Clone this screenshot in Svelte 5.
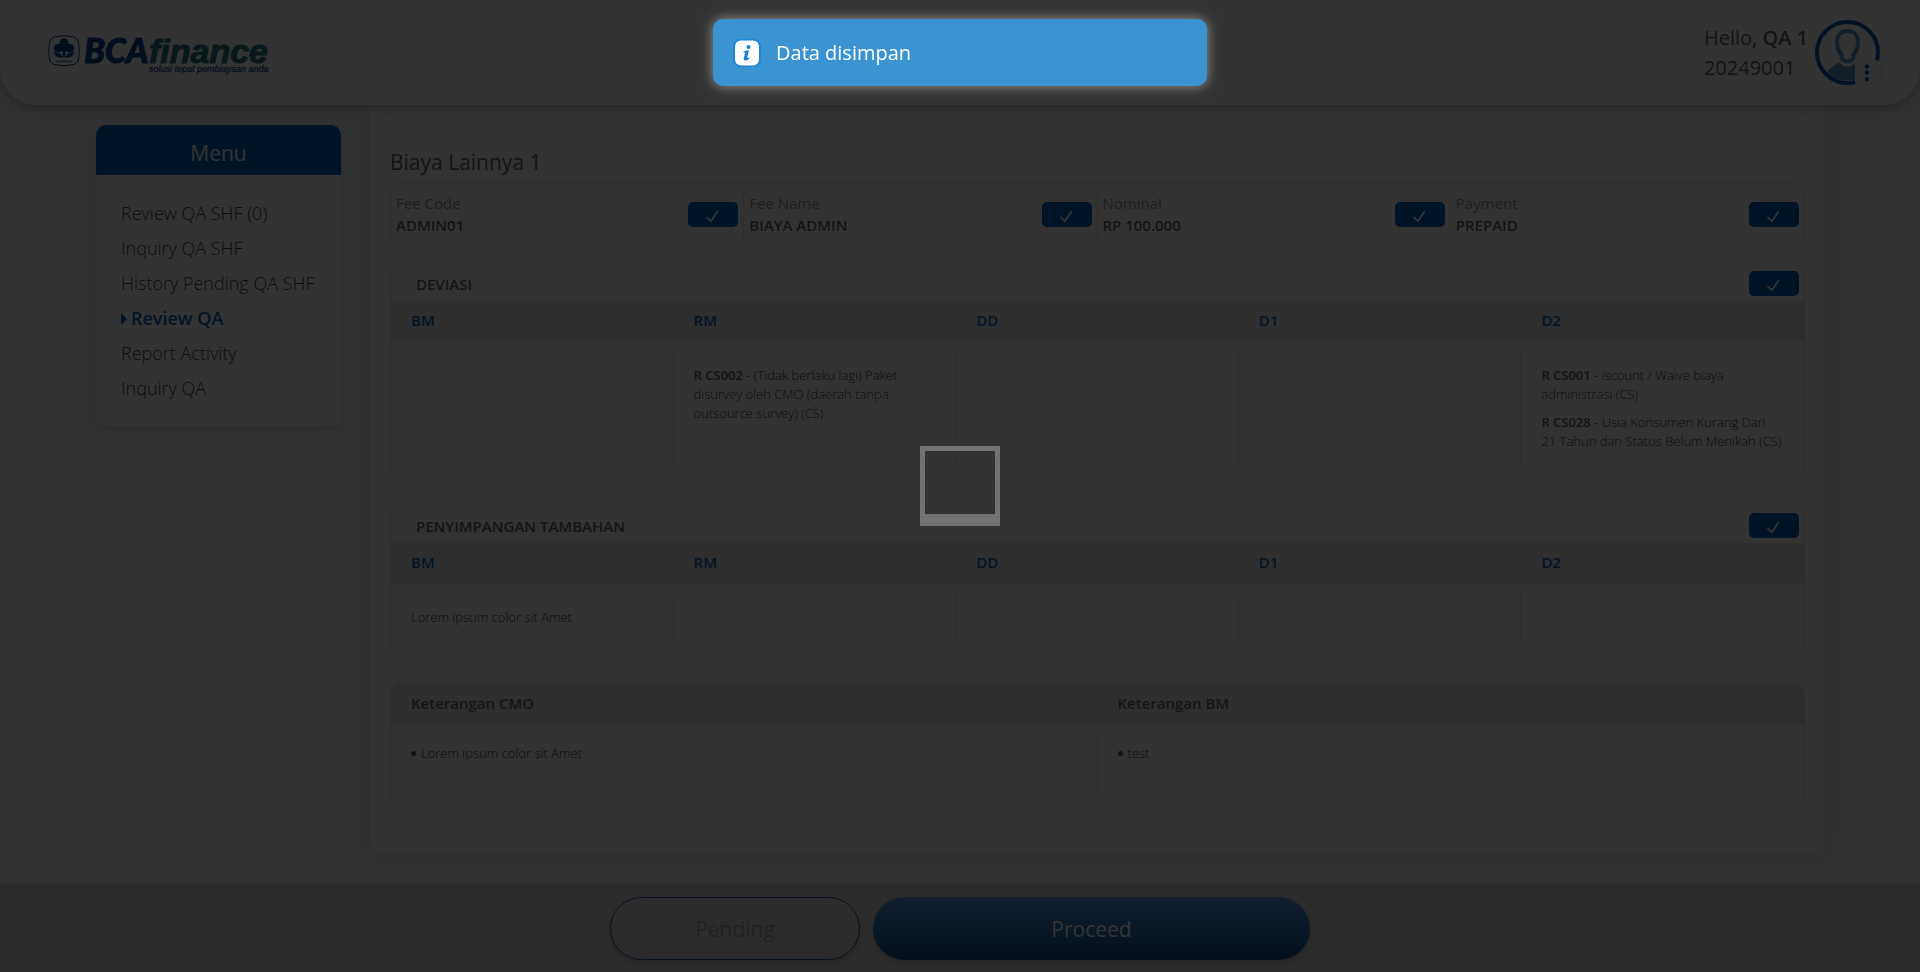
<script>
  const menu = [
    'Review QA SHF (0)',
    'Inquiry QA SHF',
    'History Pending QA SHF',
    'Review QA',
    'Report Activity',
    'Inquiry QA'
  ];
  const active = 'Review QA';

  const fees = [
    { label: 'Fee Code', value: 'ADMIN01' },
    { label: 'Fee Name', value: 'BIAYA ADMIN' },
    { label: 'Nominal', value: 'RP 100.000' },
    { label: 'Payment', value: 'PREPAID' }
  ];

  const levels = ['BM', 'RM', 'DD', 'D1', 'D2'];

  const sections = [
    {
      title: 'DEVIASI',
      cells: [
        [],
        [{ code: 'R CS002', text: '(Tidak berlaku lagi) Paket disurvey oleh CMO (daerah tanpa outsource survey) (CS)' }],
        [],
        [],
        [
          { code: 'R CS001', text: 'iscount / Waive biaya administrasi (CS)' },
          { code: 'R CS028', text: 'Usia Konsumen Kurang Dari 21\u00a0Tahun dan Status Belum Menikah (CS)' }
        ]
      ]
    },
    {
      title: 'PENYIMPANGAN TAMBAHAN',
      cells: [[{ text: 'Lorem ipsum color sit Amet' }], [], [], [], []]
    }
  ];

  const notes = [
    { title: 'Keterangan CMO', items: ['Lorem ipsum color sit Amet'] },
    { title: 'Keterangan BM', items: ['test'] }
  ];
</script>

{#snippet check(name)}
  <button class="check" type="button" aria-label={name}>
    <svg viewBox="0 0 16 16" width="16" height="16" aria-hidden="true">
      <path d="M1.500 9.200 6 13.200 12.800 3" fill="none" stroke="#fff" stroke-width="1.700" />
    </svg>
  </button>
{/snippet}

<div class="page">
  <header class="top">
    <svg class="logo" viewBox="0 0 232 44" width="232" height="44" role="img" aria-label="BCA finance">
      <path d="M6 2Q16-.6 26 2Q30 3 30.600 8Q32 15.500 30.600 24Q30 28.500 26 29.500Q16 32 6 29.500Q2 28.500 1.400 24Q0 15.500 1.400 8Q2 3 6 2Z" fill="none" stroke="#0a4391" stroke-width="1" />
      <g fill="#0a4391">
        <circle cx="16" cy="8" r="4.600" />
        <path d="M13.500 10h5l-1.500 12h-2z" />
        <circle cx="10.200" cy="13.200" r="4.300" />
        <circle cx="21.800" cy="13.200" r="4.300" />
        <path d="M5.500 17Q12 15.500 15.500 22.500Q7.500 24 5.500 17ZM26.500 17Q20 15.500 16.500 22.500Q24.500 24 26.500 17Z" />
        <path d="M8 25.500h16v1.800H8z" opacity=".6" />
      </g>
      <path d="M6.500 17Q12 16.500 15.300 22.500M25.500 17Q20 16.500 16.700 22.500" fill="none" stroke="#fff" stroke-width=".6" />
      <text x="36" y="28" class="brand-bca">BCA</text>
      <text x="101" y="28" class="brand-fin">finance</text>
      <text x="101" y="37" class="brand-tag">solusi tepat pembiayaan anda</text>
    </svg>
    <div class="user">
      <p class="hello">Hello, <strong>QA 1</strong><br />20249001</p>
      <div class="avatar">
        <svg viewBox="0 0 65 65" width="65" height="65" aria-hidden="true">
          <circle cx="32.500" cy="32.500" r="30.500" fill="none" stroke="#005cb4" stroke-width="4" />
          <path d="M12.500 52.500Q17 45 24.500 42.500Q32.500 51 40.500 42.500Q48 45 52.500 52.500Q45 60.500 32.500 60.500Q20 60.500 12.500 52.500Z" fill="#5f9cc8" />
          <path d="M32.500 11C26 11 22 15.500 22 22C22 28 23.500 31.500 26.500 34.500V38C29.500 42.500 35.500 42.500 38.500 38V34.500C41.500 31.500 43 28 43 22C43 15.500 39 11 32.500 11Z" fill="none" stroke="#5f9cc8" stroke-width="4" />
        </svg>
        <button class="more" type="button" aria-label="Account options">
          <svg viewBox="0 0 25 25" width="25" height="25" aria-hidden="true">
            <g fill="#00509a">
              <circle cx="12" cy="6.500" r="2.200" />
              <circle cx="12" cy="12.500" r="2.200" />
              <circle cx="12" cy="19" r="2.200" />
            </g>
          </svg>
        </button>
      </div>
    </div>
  </header>

  <div class="body">
    <nav class="menu">
      <h2>Menu</h2>
      <ul>
        {#each menu as item}
          <li><a href="#menu" class:active={item === active}>{item}</a></li>
        {/each}
      </ul>
    </nav>

    <main class="card">
      <div class="box tail"><span></span><span></span><span></span><span></span></div>

      <h1>Biaya Lainnya 1</h1>
      <div class="box fees">
        {#each fees as fee}
          <div class="fee">
            <div>
              <div class="label">{fee.label}</div>
              <div class="value">{fee.value}</div>
            </div>
            {@render check('Approve ' + fee.label)}
          </div>
        {/each}
      </div>

      {#each sections as section}
        <section class="box">
          <div class="title">
            <h3>{section.title}</h3>
            {@render check('Approve ' + section.title)}
          </div>
          <table>
            <thead>
              <tr>
                {#each levels as level}<th>{level}</th>{/each}
              </tr>
            </thead>
            <tbody>
              <tr>
                {#each section.cells as cell}
                  <td>
                    <div class="cell">
                      {#each cell as entry}
                        <p>{#if entry.code}<strong>{entry.code}</strong>{' - '}{/if}{entry.text}</p>
                      {/each}
                    </div>
                  </td>
                {/each}
              </tr>
            </tbody>
          </table>
        </section>
      {/each}

      <section class="box notes">
        <table>
          <thead>
            <tr>
              {#each notes as note}<th>{note.title}</th>{/each}
            </tr>
          </thead>
          <tbody>
            <tr>
              {#each notes as note}
                <td>
                  <ul class="cell">
                    {#each note.items as item}<li>{item}</li>{/each}
                  </ul>
                </td>
              {/each}
            </tr>
          </tbody>
        </table>
      </section>
    </main>
  </div>

  <footer class="actions">
    <button class="pending" type="button">Pending</button>
    <button class="proceed" type="button">Proceed</button>
  </footer>
</div>

<div class="overlay">
  <div class="spinner" role="status" aria-label="Loading"></div>
</div>

<div class="toast" role="alert">
  <svg viewBox="0 0 30 30" width="30" height="30" aria-hidden="true">
    <rect x="1" y="1" width="28" height="28" rx="7" fill="#1e88d8" />
    <rect x="3" y="2.500" width="24" height="25" rx="6" fill="#fff" />
    <circle cx="16.500" cy="9" r="2" fill="#1e80cc" />
    <path d="M11.500 13.500Q14 12 17 12.500L15.200 19.500Q15.600 20.500 17.600 19.200L17.200 21Q11 24.500 11.800 20L13.200 14.800Q12.500 14 11.300 14.600Z" fill="#1e80cc" />
  </svg>
  <span>Data disimpan</span>
</div>

<style>
  :global(body) {
    background: #f4f7fc;
    color: #666;
    font-family: 'Open Sans', 'Noto Sans', sans-serif;
    font-size: 15px;
  }
  * { box-sizing: border-box; }
  h1, h2, h3, p, ul { margin: 0; padding: 0; }
  ul { list-style: none; }
  button { font-family: inherit; border: 0; cursor: pointer; }

  .page { min-height: 100vh; display: flex; flex-direction: column; }

  .top {
    z-index: 1;
    height: 105px;
    padding: 0 40px 0 48px;
    display: flex;
    align-items: center;
    justify-content: space-between;
    background: #fff;
    border-radius: 0 0 36px 36px;
    box-shadow: 0 3px 10px rgba(0, 0, 0, 0.25);
  }
  .logo { margin-top: 8px; }
  .brand-bca { font: italic 900 34px Lato, sans-serif; fill: #0a4391; stroke: #0a4391; stroke-width: 1; }
  .brand-fin { font: italic 700 34px 'Liberation Sans', sans-serif; fill: #287682; stroke: #287682; }
  .brand-tag { font: italic 9px 'Liberation Sans', sans-serif; fill: #1b4c91; stroke: #1b4c91; stroke-width: 0.3; }
  .user { display: flex; align-items: center; gap: 7px; }
  .hello { font-size: 20px; line-height: 30px; }
  .hello strong { font-weight: 600; }
  .avatar { position: relative; height: 65px; }
  .more {
    position: absolute;
    right: 0;
    bottom: 0;
    width: 25px;
    height: 25px;
    padding: 0;
    background: #f8f8f8;
    border-radius: 4px;
    box-shadow: 0 0 8px rgba(0, 0, 0, 0.1);
  }

  .body {
    flex: 1;
    display: flex;
    align-items: flex-start;
    gap: 29px;
    padding: 0 5% 33px;
  }
  .menu {
    flex: 0 0 245px;
    margin-top: 20px;
    background: #fff;
    border-radius: 10px;
    overflow: hidden;
    box-shadow: 0 3px 10px rgba(0, 0, 0, 0.08);
  }
  .menu h2 {
    height: 50px;
    padding-top: 6px;
    background: #0864b8;
    color: #fff;
    font-size: 21px;
    line-height: 44px;
    font-weight: 500;
    text-align: center;
  }
  .menu ul { padding: 21px 25px 20px; }
  .menu li { font-size: 18px; font-weight: 300; line-height: 35px; white-space: nowrap; color: #444; }
  .menu a { color: inherit; text-decoration: none; }
  .menu a.active { color: #0864b8; font-weight: 600; }
  .menu a.active::before {
    content: '';
    display: inline-block;
    margin-right: 4px;
    border: 6px solid transparent;
    border-left: 6px solid #0864b8;
    border-right: 0;
  }

  .card {
    flex: 1;
    min-width: 0;
    padding: 0 19px 47px 20px;
    background: #fff;
    border-radius: 0 0 10px 10px;
    box-shadow: 0 0 20px rgba(0, 0, 0, 0.08);
  }
  .box {
    border: 1px solid #e4e4e4;
    border-radius: 10px;
    overflow: hidden;
    margin-bottom: 30px;
  }
  .tail {
    height: 14px;
    border-top: 0;
    border-radius: 0 0 10px 10px;
    display: grid;
    grid-template-columns: repeat(4, 1fr);
  }
  .tail span { height: 2px; border-right: 1px solid #e4e4e4; }
  .tail span:last-child { border-right: 0; }
  h1 { font-size: 21px; line-height: 26px; font-weight: 500; margin-bottom: 8px; }
  .fees {
    display: grid;
    grid-template-columns: repeat(4, 1fr);
    margin-bottom: 20px;
    padding: 3px 0 2px;
  }
  .fee {
    display: flex;
    align-items: center;
    justify-content: space-between;
    height: 55px;
    padding: 0 5px;
    border-right: 1px solid #e4e4e4;
  }
  .fee:last-child { border-right: 0; }
  .label { color: #999; line-height: 22px; }
  .value { font-weight: 600; line-height: 22px; padding-bottom: 2px; }
  .check {
    width: 50px;
    height: 25px;
    padding: 6px 0 0;
    display: flex;
    justify-content: center;
    background: #0864b8;
    border-radius: 5px;
  }

  .title {
    display: flex;
    align-items: center;
    justify-content: space-between;
    height: 35px;
    padding: 0 5px 0 25px;
  }
  h3 { font-size: 15px; font-weight: 600; }
  table { width: 100%; table-layout: fixed; border-collapse: collapse; }
  th {
    height: 40px;
    padding: 0 20px 2px;
    background: #e7e7e7;
    color: #0864b8;
    font-weight: 600;
    text-align: left;
  }
  td { height: 1px; padding: 10px 0; vertical-align: top; }
  tbody { background: #f4faf8; }
  .cell {
    height: 100%;
    padding: 15px 16px 6px 20px;
    background: #fff;
    border-right: 1px solid #e4e4e4;
    color: #3c3c3c;
    font-size: 13px;
    font-weight: 300;
    line-height: 19px;
  }
  td:last-child .cell { border-right: 0; }
  .cell p { margin-bottom: 9px; }
  .cell strong { font-weight: 600; color: #666; }
  .notes { margin-bottom: 0; }
  .notes th { color: inherit; }
  .notes .cell { height: 60px; padding-top: 10px; }
  .notes li { display: flex; align-items: center; gap: 5px; }
  .notes li::before {
    content: '';
    width: 5px;
    height: 5px;
    border-radius: 50%;
    background: #666;
  }

  .actions {
    display: flex;
    justify-content: center;
    gap: 13px;
    padding: 12px;
    background: #d8d8d8;
    box-shadow: 0 0 10px rgba(0, 0, 0, 0.08);
  }
  .actions button {
    height: 63px;
    border-radius: 32px;
    font-size: 21px;
    font-weight: 500;
    box-shadow: 0 3px 6px rgba(0, 0, 0, 0.2);
  }
  .actions .pending {
    width: 250px;
    border: 1px solid #1a5496;
    background: linear-gradient(#dedede, #cfcfcf);
    color: #a2a2a2;
  }
  .actions .proceed {
    width: 437px;
    background: linear-gradient(#5096e6, #14508a);
    color: #fff;
  }

  .overlay {
    position: fixed;
    inset: 0;
    z-index: 2;
    display: flex;
    align-items: center;
    justify-content: center;
    background: rgba(0, 0, 0, 0.8);
  }
  .spinner {
    width: 80px;
    height: 80px;
    border: 5px solid #737373;
    border-bottom-width: 12px;
  }
  .toast {
    position: fixed;
    z-index: 3;
    top: 19px;
    left: 50%;
    transform: translateX(-50%);
    width: 494px;
    height: 67px;
    padding: 0 19px;
    display: flex;
    align-items: center;
    gap: 14px;
    background: #3c93d2;
    border-radius: 10px;
    box-shadow: 0 0 12px #999;
    color: #fff;
    font-size: 20px;
  }
</style>
